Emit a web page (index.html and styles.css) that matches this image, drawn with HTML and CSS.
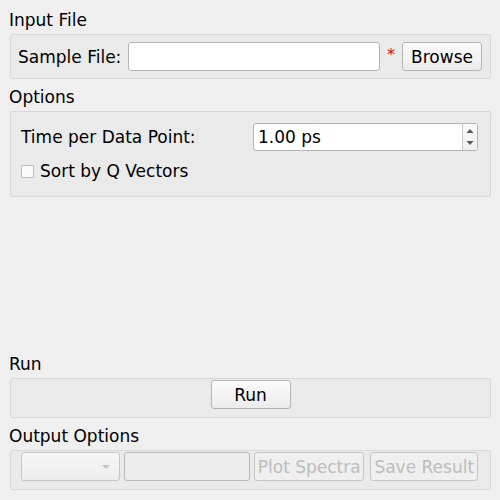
FILE: index.html
```html
<!DOCTYPE html>
<html>
<head>
<meta charset="utf-8">
<link rel="stylesheet" href="styles.css">
</head>
<body>
<div class="window">
  <div class="section">
    <div class="title">Input File</div>
    <div class="group row-input">
      <span class="lbl">Sample File:</span>
      <div class="lineedit file"></div>
      <span class="req">*</span>
      <div class="btn browse">Browse</div>
    </div>
  </div>
  <div class="section">
    <div class="title">Options</div>
    <div class="group options">
      <div class="opt-row">
        <span class="lbl time-lbl">Time per Data Point:</span>
        <div class="spin">
          <span class="spin-val">1.00 ps</span>
          <div class="spin-btns">
            <svg width="14" height="26" viewBox="0 0 14 26">
              <path d="M3.5 9 L7 5 L10.5 9 Z" fill="#555"/>
              <path d="M3.5 17 L7 21 L10.5 17 Z" fill="#555"/>
            </svg>
          </div>
        </div>
      </div>
      <div class="chk-row">
        <span class="chk"></span>
        <span class="lbl">Sort by Q Vectors</span>
      </div>
    </div>
  </div>
  <div class="spacer"></div>
  <div class="section">
    <div class="title">Run</div>
    <div class="group run">
      <div class="btn run-btn">Run</div>
    </div>
  </div>
  <div class="section">
    <div class="title">Output Options</div>
    <div class="group output">
      <div class="combo">
        <svg width="10" height="6" viewBox="0 0 10 6"><path d="M1 1 L5 5 L9 1 Z" fill="#c4c4c4"/></svg>
      </div>
      <div class="lineedit disabled out-edit"></div>
      <div class="btn disabled plot">Plot Spectra</div>
      <div class="btn disabled save">Save Result</div>
    </div>
  </div>
</div>
</body>
</html>
```
FILE: styles.css
```css
html, body {
  margin: 0;
  padding: 0;
  background: #efefef;
}
body {
  font-family: "DejaVu Sans", sans-serif;
  font-size: 17px;
  color: #000;
}
.window {
  width: 500px;
  height: 500px;
  box-sizing: border-box;
  padding: 9px 9px 10px 10px;
  display: flex;
  flex-direction: column;
}
.section + .section {
  margin-top: 7px;
}
.spacer {
  flex: 1;
}
.title {
  height: 20px;
  line-height: 22px;
  margin-left: -1px;
  margin-bottom: 5px;
}
.group {
  background: #eaeaea;
  border: 1px solid #d8d8d8;
  border-radius: 2px;
  box-sizing: border-box;
}
.lbl {
  white-space: nowrap;
}
.row-input {
  height: 45px;
  display: flex;
  align-items: center;
  padding: 0 8px 0 7px;
}
.row-input .lbl {
  width: 110px;
}
.lineedit {
  background: #fff;
  border: 1px solid #b4b4b4;
  border-radius: 3px;
  box-sizing: border-box;
  height: 29px;
}
.file {
  width: 252px;
}
.req {
  color: #cc1111;
  width: 22px;
  text-align: center;
  font-size: 16px;
  line-height: 16px;
  margin-top: -3px;
}
.btn {
  height: 29px;
  box-sizing: border-box;
  border: 1px solid #b4b4b4;
  border-radius: 3px;
  background: linear-gradient(#fbfbfb, #ececec);
  display: flex;
  align-items: center;
  justify-content: center;
  white-space: nowrap;
}
.browse {
  width: 80px;
}
.options {
  height: 86px;
  padding: 11px 12px 0 10px;
}
.opt-row {
  display: flex;
  align-items: center;
  height: 28px;
}
.time-lbl {
  width: 232px;
}
.spin {
  width: 225px;
  height: 28px;
  box-sizing: border-box;
  background: #fff;
  border: 1px solid #b4b4b4;
  border-radius: 3px;
  display: flex;
  align-items: center;
}
.spin-val {
  flex: 1;
  padding-left: 4px;
}
.spin-btns {
  width: 14px;
  height: 26px;
  border-left: 1px solid #c8c8c8;
  background: linear-gradient(#fafafa, #f0f0f0);
  border-radius: 0 2px 2px 0;
}
.spin-btns svg {
  display: block;
}
.chk-row {
  display: flex;
  align-items: center;
  margin-top: 10px;
  height: 20px;
}
.chk {
  width: 13px;
  height: 13px;
  box-sizing: border-box;
  border: 1px solid #bcbcbc;
  background: #fafafa;
  border-radius: 1px;
  margin-right: 6px;
}
.run {
  height: 40px;
  padding-top: 1px;
  display: flex;
  justify-content: center;
}
.run-btn {
  width: 80px;
}
.output {
  height: 40px;
  padding: 1px 12px 0 10px;
  display: flex;
  align-items: flex-start;
}
.combo {
  width: 99px;
  height: 29px;
  box-sizing: border-box;
  border: 1px solid #c6c6c6;
  border-radius: 3px;
  background: linear-gradient(#f6f6f6, #ededed);
  display: flex;
  align-items: center;
  justify-content: flex-end;
  padding-right: 8px;
}
.out-edit {
  width: 127px;
  margin-left: 4px;
}
.lineedit.disabled {
  background: #ececec;
  border-color: #b8b8b8;
}
.btn.disabled {
  color: #bcbcbc;
  border-color: #c6c6c6;
  background: #efefef;
}
.plot {
  width: 111px;
  margin-left: 4px;
}
.save {
  width: 108px;
  margin-left: 6px;
}
```
